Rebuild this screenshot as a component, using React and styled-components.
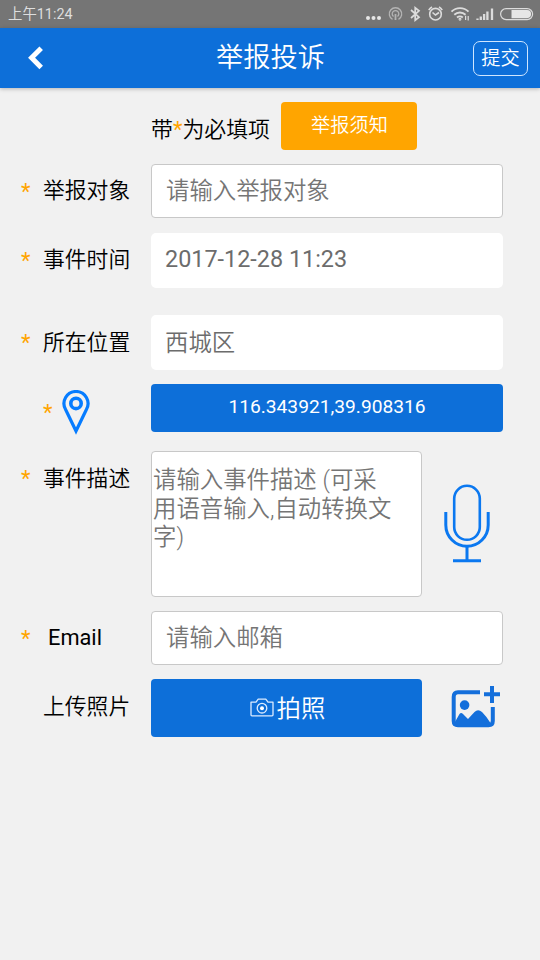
import React from 'react'
import styled, { createGlobalStyle } from 'styled-components'

function App() {
  return (
    <Page>
      <GlobalStyle />
      <StatusBar />
      <Header>
        <BackButton aria-label="返回">
          <svg width="16" height="24" viewBox="0 0 16 24">
            <path d="M14.2 2.2 L4.6 11.8 L14.2 21.4" fill="none" stroke="#fff" strokeWidth="5" />
          </svg>
        </BackButton>
        <HeaderTitle>举报投诉</HeaderTitle>
        <SubmitButton>提交</SubmitButton>
      </Header>
      <Form>
        <Notice>
          <NoticeText>带<Star>*</Star>为必填项</NoticeText>
          <NoticeButton>举报须知</NoticeButton>
        </Notice>
        <Row $height={54} $top={14}>
          <Required>*</Required>
          <Label>举报对象</Label>
          <Input placeholder="请输入举报对象" />
        </Row>
        <Row $height={55} $top={15}>
          <Required>*</Required>
          <Label>事件时间</Label>
          <Value $latin>2017-12-28 11:23</Value>
        </Row>
        <Row $height={55} $top={27}>
          <Required>*</Required>
          <Label $low>所在位置</Label>
          <Value>西城区</Value>
        </Row>
        <Row $height={48} $top={14}>
          <Pin>
            <Star>*</Star>
            <PinIcon />
          </Pin>
          <LocationButton>116.343921,39.908316</LocationButton>
        </Row>
        <Row $height={146} $top={19}>
          <Required>*</Required>
          <Label $low>事件描述</Label>
          <TextArea placeholder="请输入事件描述 (可采用语音输入,自动转换文字)" />
          <Side $right={13}>
            <MicIcon />
          </Side>
        </Row>
        <Row $height={54} $top={14}>
          <Required>*</Required>
          <Label $latin>Email</Label>
          <Input placeholder="请输入邮箱" />
        </Row>
        <Row $height={58} $top={14}>
          <Required />
          <Label $low>上传照片</Label>
          <PhotoButton>
            <CameraIcon />
            <PhotoText>拍照</PhotoText>
          </PhotoButton>
          <Side $right={2}>
            <AddPhotoIcon />
          </Side>
        </Row>
      </Form>
    </Page>
  )
}

function StatusBar() {
  return (
    <StatusWrapper>
      <StatusTime>上午11:24</StatusTime>
      <svg width="176" height="28" viewBox="0 0 176 28" fill="none" stroke="#dcdcdc">
        <g fill="#e6e6e6" stroke="none">
          <circle cx="4" cy="18" r="2" />
          <circle cx="9.5" cy="18" r="2" />
          <circle cx="15" cy="18" r="2" />
        </g>
        <g stroke="#b4b4b4" strokeWidth="1.3">
          <path d="M28.5 19.4 A6.2 6.2 0 1 1 34.5 19.4" />
          <path d="M29.5 16.5 A3.3 3.3 0 1 1 33.5 16.5" />
          <path d="M31.5 14 V20" strokeWidth="1.8" />
        </g>
        <path d="M47 10 L55 17.2 L51.2 20.2 V7.8 L55 10.8 L47 18" strokeWidth="1.7" />
        <g strokeWidth="1.6">
          <circle cx="71.5" cy="14.2" r="5.8" />
          <path d="M68.5 12.5 L71.5 15 L75 12.5" />
          <path d="M64.8 10.2 A8 8 0 0 1 68 7 M75 7 A8 8 0 0 1 78.2 10.2" />
        </g>
        <g strokeWidth="1.9">
          <path d="M87.5 11.7 A12 12 0 0 1 104.5 11.7" />
          <path d="M90.3 14.8 A8 8 0 0 1 101.5 14.8" />
          <path d="M93 17.6 A4.5 4.5 0 0 1 98.8 17.6" />
          <circle cx="96" cy="19.3" r="0.5" />
          <path d="M101.6 15.7 V20 M104.2 16 V20.5" strokeWidth="1.2" />
        </g>
        <path d="M113.5 20 V18.5 M116.8 20 V16.5 M120.1 20 V14 M123.4 20 V11.5 M128 20 V8.5" strokeWidth="2.3" />
        <rect x="136.6" y="8.6" width="32" height="11" rx="5.5" strokeWidth="1.2" />
        <path d="M147.5 10 H163 A4 4 0 0 1 163 18.2 H147.5 Z" fill="#e6e6e6" stroke="none" />
      </svg>
    </StatusWrapper>
  )
}

function PinIcon() {
  return (
    <svg width="28" height="46" viewBox="0 0 28 46" fill="none" stroke="#067cff">
      <path d="M14 41 L3.6 19.5 A12 12 0 1 1 24.4 19.5 Z" strokeWidth="3.2" />
      <circle cx="14" cy="13.4" r="5.2" strokeWidth="3.6" />
    </svg>
  )
}

function MicIcon() {
  return (
    <svg width="46" height="80" viewBox="0 0 46 80" fill="none" stroke="#0b78f0" strokeWidth="3">
      <rect x="10.2" y="1.8" width="25.6" height="54" rx="12.8" strokeWidth="2.6" />
      <path d="M1.8 28 V41 A21.2 21.2 0 0 0 44.2 41 V28" />
      <path d="M23 62.5 V77 M9 76.8 H37" />
    </svg>
  )
}

function CameraIcon() {
  return (
    <svg width="24" height="20" viewBox="0 0 24 20" fill="none" stroke="#dcecff" strokeWidth="1.3">
      <path d="M1 17 V4.2 H6 L8.2 1.2 H15.8 L18 4.2 H23 V17 Q23 17.8 22 17.8 H2 Q1 17.8 1 17 Z" strokeLinejoin="round" />
      <circle cx="12" cy="10.2" r="4.8" />
      <circle cx="12" cy="10.2" r="2" fill="#fff" stroke="none" />
    </svg>
  )
}

function AddPhotoIcon() {
  return (
    <svg width="50" height="44" viewBox="0 0 50 44">
      <path d="M29 6.2 H7 Q2.7 6.2 2.7 11 V35 Q2.7 39.2 7 39.2 H37.5 Q41.8 39.2 41.8 35 V21" fill="none" stroke="#146fdb" strokeWidth="4" />
      <circle cx="13.6" cy="19.1" r="4.8" fill="#146fdb" />
      <path d="M4.5 35 L8.5 28 Q10 26 12 28 L17 33 L23.5 26 Q27 22.5 31 26 Q36 31 39.5 37 V40 H4.5 Z" fill="#146fdb" />
      <path d="M41 0 V17 M33 8.2 H49" stroke="#146fdb" strokeWidth="4" />
    </svg>
  )
}

const GlobalStyle = createGlobalStyle`
  * {
    box-sizing: border-box;
  }
  body {
    margin: 0;
    background-color: #f1f1f1;
  }
  body, input, textarea, button {
    font-family: Roboto, 'Noto Sans CJK SC', sans-serif;
    font-weight: 350;
  }
  button {
    padding: 0;
    border: none;
  }
`
const Page = styled.div`
  height: 960px;
  overflow: hidden;
  color: #000;
`
const StatusWrapper = styled.div`
  height: 28px;
  padding: 0 0 0 8px;
  display: flex;
  align-items: center;
  justify-content: space-between;
  background-color: #757575;
`
const StatusTime = styled.span`
  padding-top: 2px;
  color: #dedede;
  font-size: 14.4px;
  font-weight: 400;
  line-height: 28px;
`
const Header = styled.header`
  height: 60px;
  padding: 0 12px 0 27px;
  display: grid;
  grid-template-columns: 41px 1fr 55px;
  align-items: center;
  background-color: #0d6fd9;
  box-shadow: 0 1px 4px rgba(0, 0, 0, 0.25);
`
const BackButton = styled.button`
  width: 16px;
  height: 24px;
  background: none;
`
const HeaderTitle = styled.h1`
  margin: 0;
  color: #fff;
  font-size: 27.2px;
  font-weight: 350;
  line-height: 60px;
  text-align: center;
`
const SubmitButton = styled.button`
  height: 35px;
  color: #fff;
  font-size: 19.2px;
  line-height: 31px;
  background: none;
  border: 1.5px solid #cfe6ff;
  border-radius: 7px;
`
const Form = styled.main`
  padding: 14px 37px 0 0;
`
const Notice = styled.div`
  height: 48px;
  padding-left: 151px;
  display: flex;
  gap: 11px;
`
const NoticeText = styled.span`
  font-size: 21.9px;
  line-height: 56px;
  white-space: nowrap;
`
const Star = styled.span`
  color: #ffa500;
  font-size: 22px;
  font-weight: 400;
`
const NoticeButton = styled.button`
  width: 136px;
  padding: 0 0 5px 1px;
  color: #fff;
  font-size: 19.2px;
  background-color: #ffa500;
  border-radius: 4px;
`
const Row = styled.div`
  height: ${props => props.$height}px;
  margin-top: ${props => props.$top}px;
  display: flex;
`
const Required = styled.span`
  width: 43px;
  padding-left: 21px;
  padding-top: 1px;
  color: #ffa500;
  font-size: 22px;
  font-weight: 400;
  line-height: 54px;
`
const Label = styled.label`
  width: 108px;
  padding-left: ${props => (props.$latin ? 5 : 0)}px;
  font-size: 21.8px;
  font-weight: ${props => (props.$latin ? 400 : 350)};
  line-height: ${props => (props.$low ? 56 : 54)}px;
`
const Input = styled.input`
  flex: 1;
  min-width: 0;
  padding: 0 14px;
  font-size: 23.4px;
  background-color: #fff;
  border: 1px solid #c8c8c8;
  border-radius: 4px;
  &::placeholder {
    color: #757575;
  }
`
const Value = styled.div`
  flex: 1;
  padding-left: 14px;
  color: #6c6c6c;
  font-size: 23.4px;
  font-weight: ${props => (props.$latin ? 400 : 350)};
  line-height: ${props => (props.$latin ? 53 : 56)}px;
  background-color: #fff;
  border-radius: 5px;
`
const Pin = styled.div`
  width: 151px;
  padding: 9px 0 0 43px;
  display: flex;
  align-items: center;
  gap: 10px;
`
const LocationButton = styled.button`
  flex: 1;
  padding-bottom: 4px;
  color: #fff;
  font-size: 19.2px;
  font-weight: 400;
  background-color: #0d6fd9;
  border-radius: 4px;
`
const TextArea = styled.textarea`
  width: 271px;
  padding: 14px 24px 0 1px;
  font-size: 23.4px;
  line-height: 28.7px;
  background-color: #fff;
  border: 1px solid #c8c8c8;
  border-radius: 4px;
  resize: none;
  &::placeholder {
    color: #757575;
  }
`
const Side = styled.div`
  flex: 1;
  display: flex;
  align-items: center;
  justify-content: flex-end;
  padding-right: ${props => props.$right}px;
`
const PhotoButton = styled.button`
  width: 271px;
  padding-left: 2px;
  display: flex;
  align-items: center;
  justify-content: center;
  gap: 3px;
  background-color: #0d6fd9;
  border-radius: 4px;
`
const PhotoText = styled.span`
  padding-bottom: 3px;
  color: #fff;
  font-size: 24.4px;
`

export default App
